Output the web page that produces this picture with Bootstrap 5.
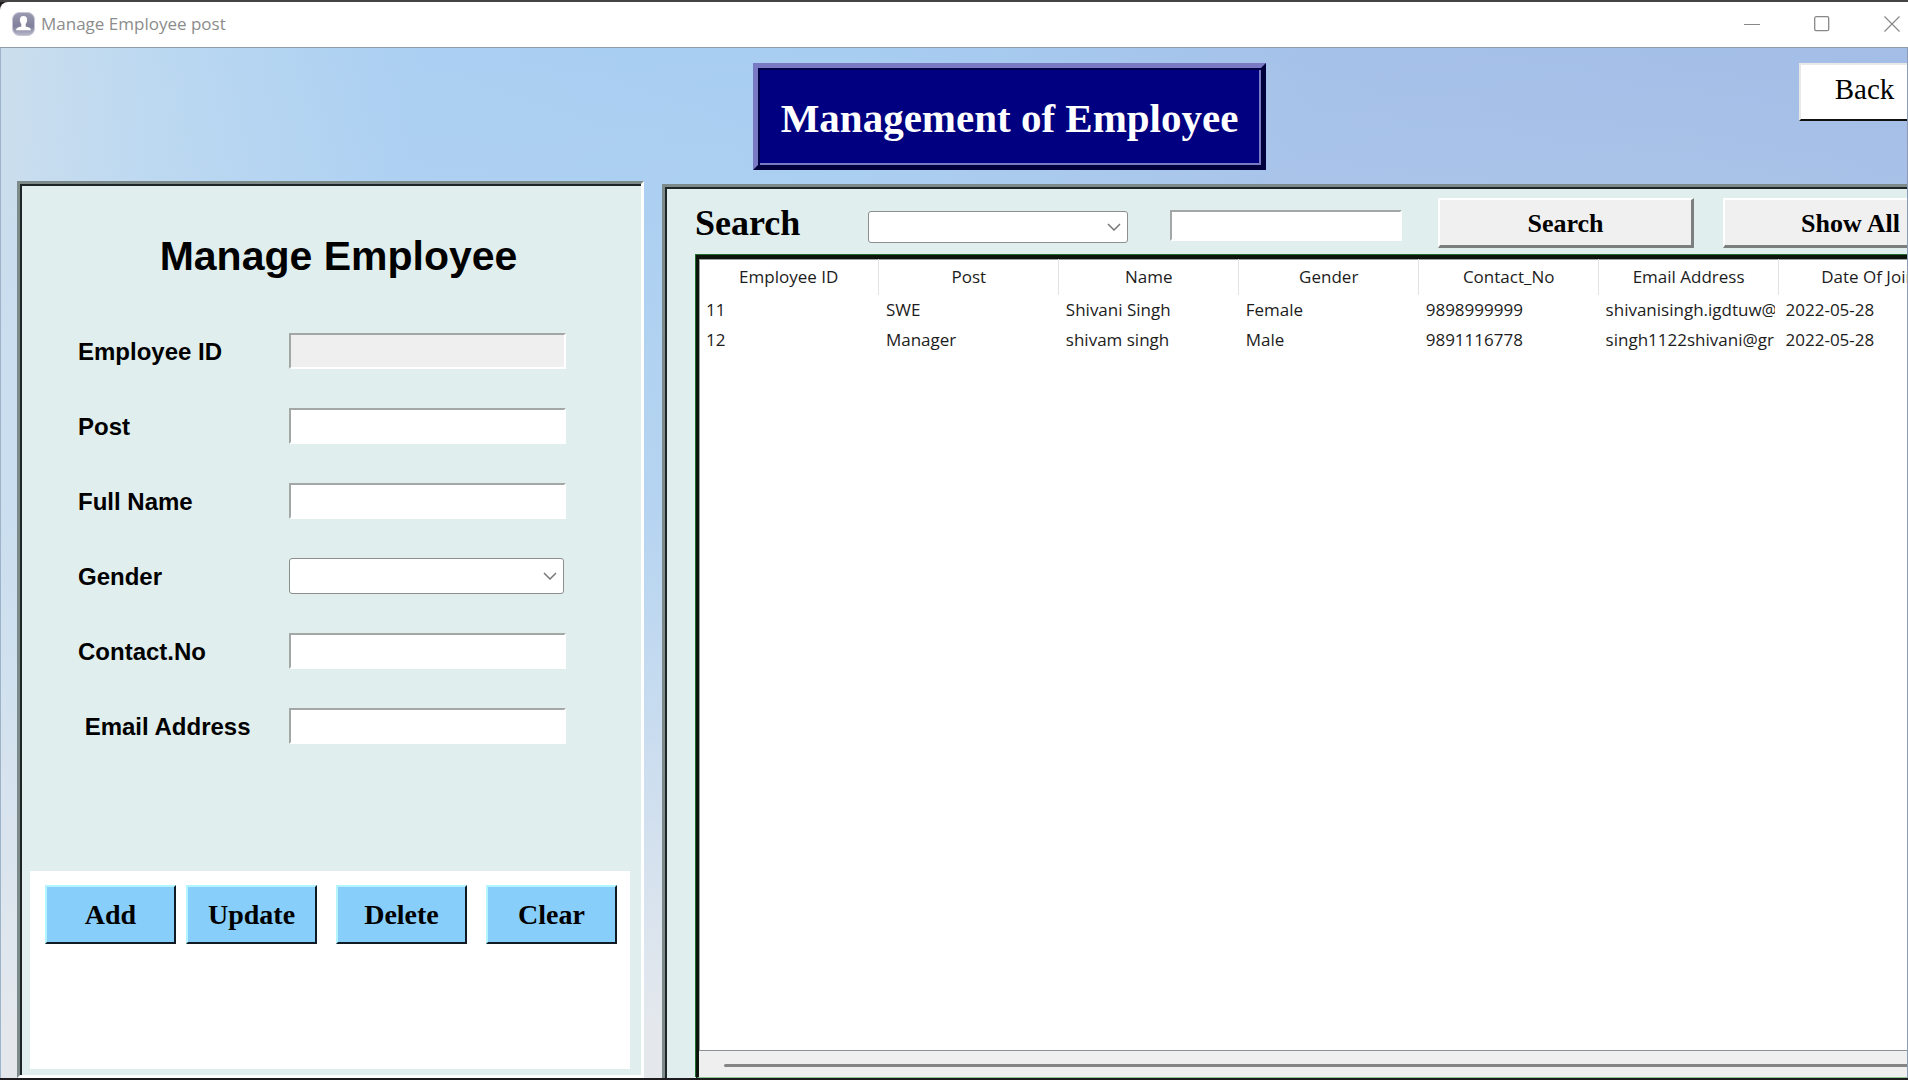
<!DOCTYPE html>
<html lang="en">
<head>
<meta charset="utf-8">
<meta name="viewport" content="width=device-width, initial-scale=1">
<title>Manage Employee post</title>
<link href="https://cdn.jsdelivr.net/npm/bootstrap@5.3.0/dist/css/bootstrap.min.css" rel="stylesheet">
<style>
  :root { --mint: #e0eeed; --ui: "Open Sans", "Noto Sans", sans-serif; --times: "Liberation Serif", serif; --arial: "Liberation Sans", sans-serif; }
  body { background: #1d1b1e; color: #000; font-family: var(--ui); }
  .app-window { height: 100vh; min-height: 1000px; border-top: 2px solid #444243; border-bottom: 2px solid #1d1b1e; }
  .title-bar { height: 46px; background: #fff; border-bottom: 1px solid #8f9ba6; border-top-left-radius: 8px; color: #8c8c8c; font-size: 17px; padding: 0 8px 1px 12px; gap: 6px; }
  .title-btn { border: 0; background: none; padding: 0; width: 16px; height: 16px; display: flex; }
  .title-tools { gap: 54px; }
  .client { border-left: 1px solid #9db4c8; border-right: 1px solid #8c9cb8;
    background:
      linear-gradient(180deg, rgba(228,232,237,0) 0%, rgba(222,231,240,.25) 45%, rgba(228,232,237,1) 95%),
      linear-gradient(98deg, #cbdeed 0, #bbd8f1 160px, #aacff2 420px, #a7cdf1 860px, #a5c1e9 1300px, #a3bde6 100%); }
  /* the form is laid out for a screen a little wider than the window */
  .stage { width: calc(100% + 111px); }
  .app-head { height: 133px; display: grid; grid-template-columns: 1fr auto 1fr; align-items: start; padding-top: 15px; }
  .banner { background: #000080; color: #fff; font: bold 41px/48px var(--times); padding: 26px 23px 23px; border: 5px solid; border-color: #7a7ac4 #00003c #00003c #7a7ac4; box-shadow: inset 2px 2px 0 #00004a, inset -2px -2px 0 #7a7ac4; }
  .tk-btn { border: 2px solid; border-radius: 0; padding: 0; color: #000; font-family: var(--times); font-weight: bold; }
  .back-btn { width: 131px; height: 58px; background: #fff; border-color: #e8e8e8 #111 #111 #e8e8e8; font-weight: normal; font-size: 29px; line-height: 36px; margin-right: 88px; padding-bottom: 6px; }
  .sunken { background: var(--mint); border: 3px solid; border-color: #7d8a8a #fdfefe #fdfefe #7d8a8a; box-shadow: inset 2px 2px 0 #1d2625; }
  .form-side { width: 627px; }
  .list-side { margin: 3px 0 0 18px; }
  .panel-title { font: bold 41px/48px var(--arial); margin: 48px 0 53px; }
  .field-stack { gap: 39px; padding-left: 58px; }
  .field-row { height: 36px; }
  .field-row label { width: 211px; font: bold 24px/38px var(--arial); }
  .tk-entry { width: 277px; height: 36px; border: 2px solid; border-color: #a3a8a7 #fff #fff #a3a8a7; border-radius: 0; background: #fff; padding: 0 6px; font-size: 16px; }
  .tk-entry:disabled { background: #efefef; }
  .tk-select { width: 275px; height: 36px; border: 1px solid #8b8f8e; border-radius: 3px; padding: 0 28px 0 6px; font-size: 16px;
    background: #fff url("data:image/svg+xml,%3Csvg xmlns='http://www.w3.org/2000/svg' viewBox='0 0 14 8'%3E%3Cpath d='M1 1l6 6 6-6' fill='none' stroke='%23777' stroke-width='1.5'/%3E%3C/svg%3E") no-repeat right 6px center / 14px 8px; }
  .action-frame { height: 198px; margin: 0 11px 6px 10px; background: #fff; padding: 14px 15px; display: grid; grid-template-columns: 141px 150px 150px 131px; align-items: start; }
  .sky-btn { width: 131px; height: 59px; background: #87cefa; border-color: #b4f4ff #0f1a22 #0f1a22 #b4f4ff; font-size: 28px; line-height: 32px; }
  .search-bar { height: 68px; padding: 11px 0 7px 30px; display: grid; grid-template-columns: 173px 302px 268px 285px 256px; align-items: center; }
  .search-bar > label { font: bold 36px/48px var(--times); }
  .search-bar .tk-select { width: 260px; height: 32px; }
  .search-bar .tk-entry { width: 232px; height: 31px; }
  .gray-btn { width: 256px; height: 50px; background: #f0f0f0; border-color: #fff #7b7f7e #7b7f7e #fff; border-width: 2px 3px 3px 2px; font-size: 26px; line-height: 32px; padding-top: 2px; }
  .tree-frame { margin-left: 31px; background: #fff; border-top: 4px solid #0c140c; border-left: 3px solid #0c140c; border-bottom: 1px solid #8fc692; box-shadow: -1px -1px 0 #1f6b2c; }
  .tree-inner { box-shadow: inset 1px 1px 0 #9a9fa0; }
  .tree { table-layout: fixed; width: 1260px; font-size: 17px; line-height: 24px; color: #1c1c1c; }
  .tree th { height: 36px; padding: 0; font-weight: normal; text-align: center; border-right: 1px solid #e3e3e3; }
  .tree td { height: 30px; padding: 0 4px 0 7px; }
  .hbar { height: 27px; background: #efefef; border-top: 1px solid #8d9199; padding: 13px 0 0 25px; }
  .hbar-thumb { height: 3px; background: #858585; border-radius: 2px; }
</style>
<script src="https://cdn.jsdelivr.net/npm/bootstrap@5.3.0/dist/js/bootstrap.bundle.min.js"></script>
</head>
<body class="overflow-hidden">
<div class="app-window d-flex flex-column">
  <header class="title-bar d-flex align-items-center flex-shrink-0">
    <svg width="23" height="24" viewBox="0 0 23 24" aria-hidden="true">
      <defs><linearGradient id="ic" x1="0" y1="0" x2="0" y2="1"><stop offset="0" stop-color="#9a9ab0"/><stop offset=".6" stop-color="#80809c"/><stop offset="1" stop-color="#b9b9cb"/></linearGradient></defs>
      <rect x=".5" y=".5" width="22" height="23" rx="7" fill="url(#ic)" stroke="#c5c5d3"/>
      <path d="M11.500 4c-2.800 0-3.800 2-3.600 4.500.1 1.600.8 2.600 1.400 3.600v2.400c-1.500.6-5 .6-5.300 3.700h15c-.3-3.100-3.800-3.100-5.300-3.700v-2.400c.6-1 1.300-2 1.400-3.600C15.300 6 14.300 4 11.500 4z" fill="#fff"/>
    </svg>
    <span>Manage Employee post</span>
    <div class="title-tools d-flex ms-auto">
      <button class="title-btn" aria-label="Minimize"><svg width="16" height="16" viewBox="0 0 16 16"><path d="M0 8.500h16" stroke="#888" /></svg></button>
      <button class="title-btn" aria-label="Maximize"><svg width="16" height="16" viewBox="0 0 16 16"><rect x=".7" y=".7" width="14" height="14" rx="1.500" fill="none" stroke="#888" stroke-width="1.300"/></svg></button>
      <button class="title-btn" aria-label="Close"><svg width="16" height="16" viewBox="0 0 16 16"><path d="M.5.5l15 15M15.500.5l-15 15" stroke="#888" stroke-width="1.200"/></svg></button>
    </div>
  </header>

  <main class="client flex-grow-1 overflow-hidden d-flex flex-column">
    <div class="stage flex-grow-1 d-flex flex-column">
      <div class="app-head flex-shrink-0">
        <span></span>
        <h1 class="banner mb-0">Management of Employee</h1>
        <button class="btn tk-btn back-btn ms-auto">Back</button>
      </div>

      <div class="d-flex flex-grow-1 ps-3">
        <section class="sunken form-side flex-shrink-0 d-flex flex-column">
          <h2 class="panel-title text-center ps-3">Manage Employee</h2>
          <form class="field-stack d-flex flex-column">
            <div class="field-row d-flex"><label for="emp">Employee ID</label><input id="emp" class="form-control tk-entry" type="text" disabled></div>
            <div class="field-row d-flex"><label for="post">Post</label><input id="post" class="form-control tk-entry" type="text"></div>
            <div class="field-row d-flex"><label for="full">Full Name</label><input id="full" class="form-control tk-entry" type="text"></div>
            <div class="field-row d-flex"><label for="gender">Gender</label><select id="gender" class="form-select tk-select"><option></option></select></div>
            <div class="field-row d-flex"><label for="contact">Contact.No</label><input id="contact" class="form-control tk-entry" type="text"></div>
            <div class="field-row d-flex"><label for="email">&nbsp;Email Address</label><input id="email" class="form-control tk-entry" type="text"></div>
          </form>
          <div class="action-frame mt-auto">
            <button class="btn tk-btn sky-btn">Add</button>
            <button class="btn tk-btn sky-btn">Update</button>
            <button class="btn tk-btn sky-btn">Delete</button>
            <button class="btn tk-btn sky-btn">Clear</button>
          </div>
        </section>

        <section class="sunken list-side flex-grow-1 d-flex flex-column border-bottom-0">
          <div class="search-bar flex-shrink-0">
            <label for="by">Search</label>
            <select id="by" class="form-select tk-select mt-2"><option></option></select>
            <input class="form-control tk-entry mt-1" type="text" aria-label="Search text">
            <button class="btn tk-btn gray-btn">Search</button>
            <button class="btn tk-btn gray-btn">Show All</button>
          </div>
          <div class="tree-frame flex-grow-1 d-flex flex-column">
            <div class="tree-inner flex-grow-1">
              <table class="tree">
                <thead><tr><th>Employee ID</th><th>Post</th><th>Name</th><th>Gender</th><th>Contact_No</th><th>Email Address</th><th>Date Of Join</th></tr></thead>
                <tbody>
                  <tr><td>11</td><td>SWE</td><td>Shivani Singh</td><td>Female</td><td>9898999999</td><td><div class="overflow-hidden text-nowrap">shivanisingh.igdtuw@</div></td><td>2022-05-28</td></tr>
                  <tr><td>12</td><td>Manager</td><td>shivam singh</td><td>Male</td><td>9891116778</td><td><div class="overflow-hidden text-nowrap">singh1122shivani@gr</div></td><td>2022-05-28</td></tr>
                </tbody>
              </table>
            </div>
            <div class="hbar"><div class="hbar-thumb"></div></div>
          </div>
        </section>
      </div>
    </div>
  </main>
</div>
</body>
</html>
